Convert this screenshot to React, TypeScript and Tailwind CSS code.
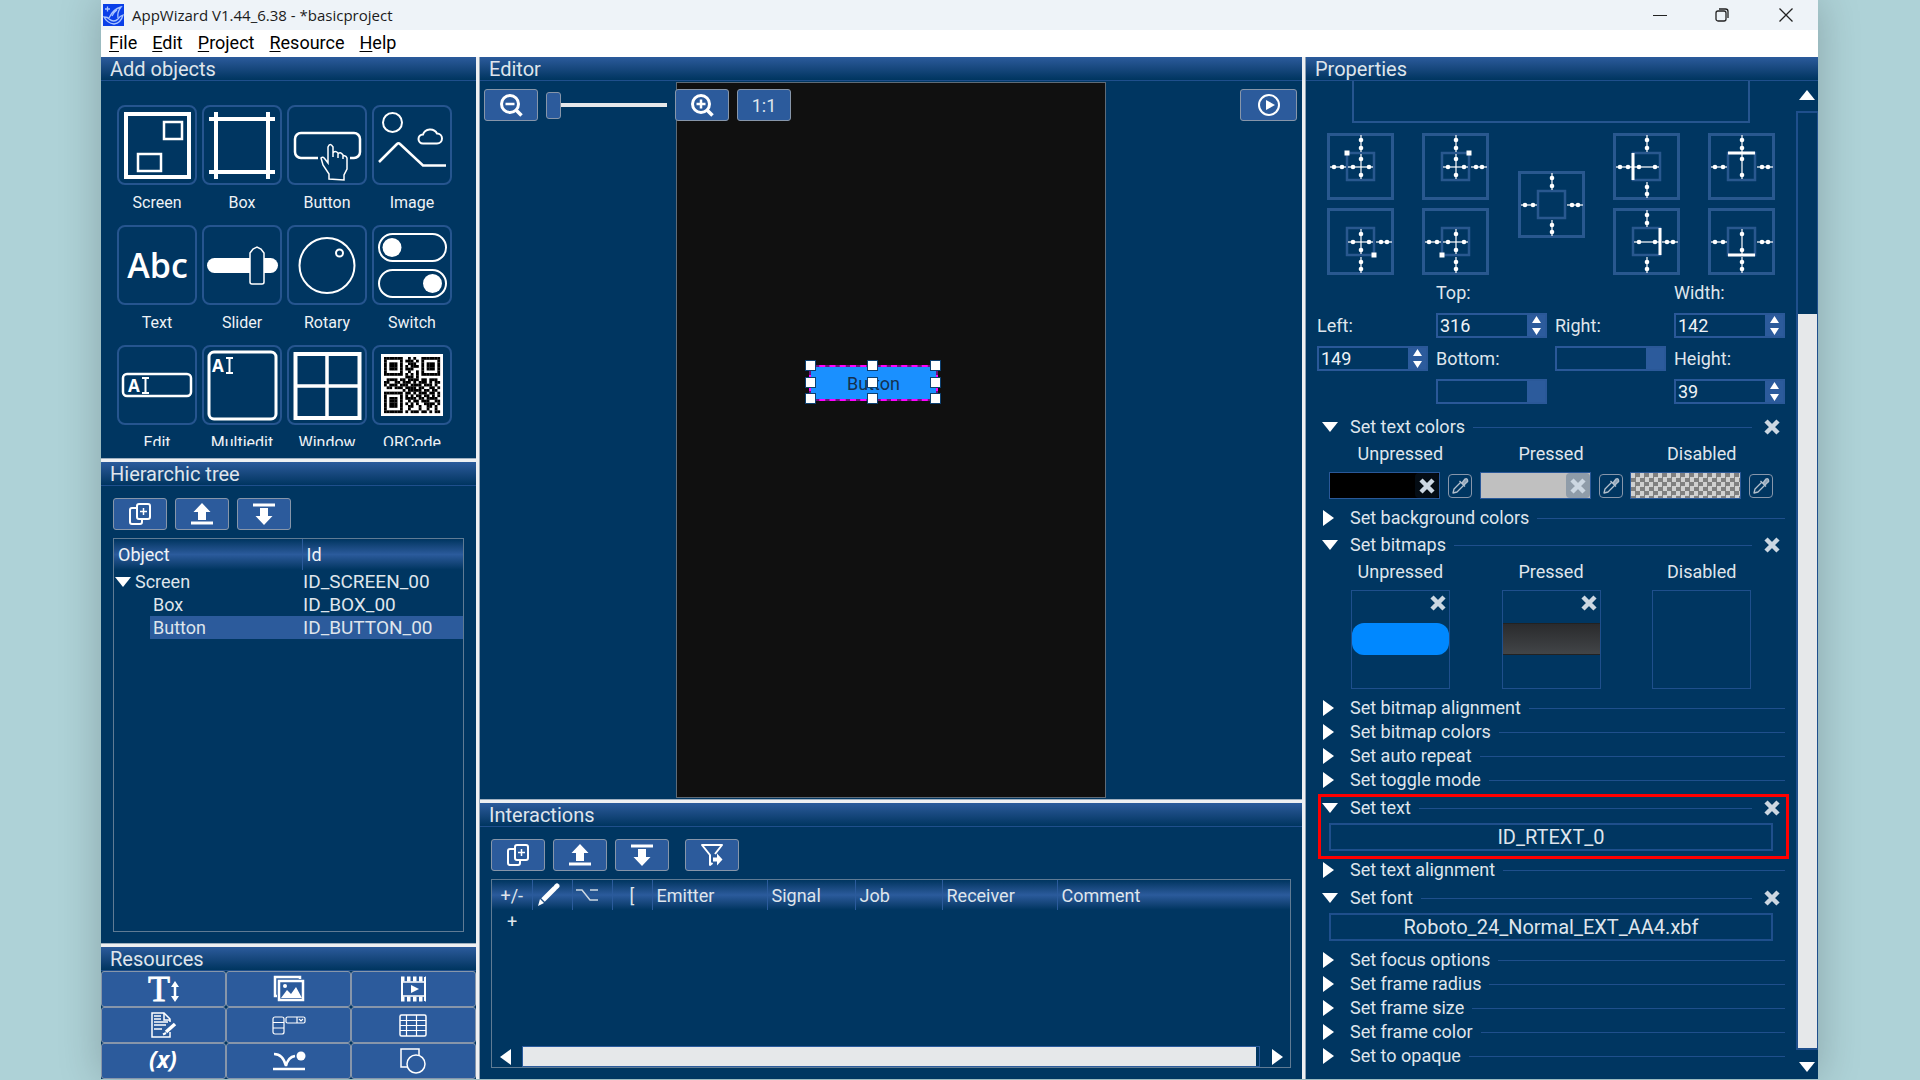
import React from "react";

const QR_ROWS = [
  "111111100101001111111",
  "100000101110101000001",
  "101110100111001011101",
  "101110101011101011101",
  "101110101110001011101",
  "100000100100101000001",
  "111111101010101111111",
  "000000001110100000000",
  "011110110111101101110",
  "110011011101011101011",
  "101110111011110111010",
  "011011101111011001101",
  "000000010111110110110",
  "111111101101011101101",
  "100000101010110110101",
  "101110101111011011110",
  "101110100101101110011",
  "101110101010100111101",
  "101110100110010011010",
  "100000100100010010010",
  "111111101011101101011",
];

function Svg({ w, h, children, label }: { w: number; h: number; children: React.ReactNode; label?: string }) {
  return (
    <svg width={w} height={h} viewBox={`0 0 ${w} ${h}`} fill="none" stroke="white" aria-label={label} aria-hidden={!label} className="shrink-0">
      {children}
    </svg>
  );
}

function PanelTitle({ children }: { children: React.ReactNode }) {
  return (
    <h2 className="flex h-6 shrink-0 items-center border-b border-[#1f4f8c] bg-linear-to-b from-[#2b5b9c] to-[#003560] px-[9px] text-[20px] leading-6 text-[#dfe5ec]">
      {children}
    </h2>
  );
}

function IconButton({ label, children, className = "w-[54px]" }: { label: string; children: React.ReactNode; className?: string }) {
  return (
    <button aria-label={label} className={`flex h-8 shrink-0 items-center justify-center rounded-[3px] border border-[#8796aa] bg-[#2c5b9c] text-[18px] text-[#dfe5ec] ${className}`}>
      {children}
    </button>
  );
}

const HSplit = () => <div className="h-1 shrink-0 border-t border-[#9fb0c0] bg-[#eff0f2]" />;
const VSplit = () => <div className="w-1 shrink-0 border-r border-[#8fa2b5] bg-[#eff0f2]" />;

const AddIcon = () => (
  <Svg w={24} h={24}>
    <g strokeWidth="2">
      <path d="M8 6H4a2 2 0 0 0-2 2v12a2 2 0 0 0 2 2h8a2 2 0 0 0 2-2v-3" />
      <rect x="9" y="2" width="13" height="15" rx="2" />
      <path d="M15.500 6v7M12 9.500h7" strokeWidth="1.500" />
    </g>
  </Svg>
);
const UpIcon = () => (
  <Svg w={24} h={24}>
    <path d="M12 1l8.500 9h-4.500v8h-8v-8h-4.500z" fill="white" stroke="none" />
    <path d="M1 21h22" strokeWidth="3" />
  </Svg>
);
const DownIcon = () => (
  <Svg w={24} h={24}>
    <path d="M12 23l8.500-9h-4.500v-8h-8v8h-4.500z" fill="white" stroke="none" />
    <path d="M1 3h22" strokeWidth="3" />
  </Svg>
);
const FilterIcon = () => (
  <Svg w={24} h={24}>
    <path d="M12.500 20l-2.500 2V12L2 2h20l-7 9" strokeWidth="2" strokeLinejoin="round" />
    <path d="M13 14.500h4v-4l5.500 6-5.500 6v-4h-4z" fill="white" stroke="none" />
  </Svg>
);
const ZoomIcon = ({ plus }: { plus?: boolean }) => (
  <Svg w={24} h={24}>
    <circle cx="11" cy="11" r="8.500" strokeWidth="3" />
    <path d="M16.500 16.500l6 6" strokeWidth="3.500" />
    <path d={plus ? "M6.500 11h9M11 6.500v9" : "M6.500 11h9"} strokeWidth="2.500" />
  </Svg>
);
const CrossIcon = () => (
  <Svg w={16} h={16}>
    <path d="M2 2l12 12M14 2l-12 12" stroke="#ccd7e2" strokeWidth="4.500" />
  </Svg>
);

const Beam = ({ x, y }: { x: number; y: number }) => (
  <>
    <text x={x} y={y} fill="white" stroke="none" fontSize="17" fontWeight="700" fontFamily="Open Sans, sans-serif">A</text>
    <path d={`M${x + 14} ${y - 14}h7M${x + 17.5} ${y - 14}v15M${x + 14} ${y + 1}h7`} strokeWidth="2" />
  </>
);

const OBJECTS: { name: string; icon: React.ReactNode }[] = [
  {
    name: "Screen",
    icon: (
      <>
        <rect x="9" y="9" width="63" height="63" strokeWidth="4" />
        <rect x="47" y="17" width="18" height="17" strokeWidth="2.500" />
        <rect x="21" y="49" width="23" height="17" strokeWidth="2.500" />
      </>
    ),
  },
  { name: "Box", icon: <path d="M14 7v67M66 7v67M7 14h66M7 67h66" strokeWidth="4" /> },
  {
    name: "Button",
    icon: (
      <>
        <path d="M31 53H14a6 6 0 0 1-6-6V34a6 6 0 0 1 6-6h53a6 6 0 0 1 6 6v13a6 6 0 0 1-6 6h-4" strokeWidth="2.500" />
        <path d="M42 74v-5l-6-9-2-7q2-2 4 1l3 4V42q2-5 5 0v10v-4q2-3 5 0v5v-4q2-3 5 1v4v-3q3-1 4 2v11l-3 6v5z" strokeWidth="1.500" />
      </>
    ),
  },
  {
    name: "Image",
    icon: (
      <>
        <circle cx="20.500" cy="17.500" r="9.500" strokeWidth="2" />
        <path d="M7 57l18-18q1.500-1.500 3 0l23 21.500h23" strokeWidth="2.500" />
        <path d="M51 38.500a4.500 4.500 0 0 1 0-9a7.500 7 0 0 1 14-1a5 5 0 0 1 0 10z" strokeWidth="2" />
      </>
    ),
  },
  {
    name: "Text",
    icon: (
      <text x="40.500" y="53" textAnchor="middle" fill="white" stroke="none" fontSize="34" fontWeight="600" fontFamily="Open Sans, sans-serif">Abc</text>
    ),
  },
  {
    name: "Slider",
    icon: (
      <>
        <rect x="5" y="33" width="71" height="15" rx="7.500" fill="white" stroke="none" />
        <path d="M48 28l3-4 4-2 4 2 3 4v29q0 2-2 2H50q-2 0-2-2z" fill="#003661" strokeWidth="1.500" />
      </>
    ),
  },
  {
    name: "Rotary",
    icon: (
      <>
        <circle cx="40" cy="40.500" r="27.500" strokeWidth="2" />
        <circle cx="52.500" cy="28" r="3.500" strokeWidth="2" />
      </>
    ),
  },
  {
    name: "Switch",
    icon: (
      <>
        <rect x="7" y="9" width="67" height="27" rx="13.500" strokeWidth="2" />
        <rect x="7" y="45" width="67" height="27" rx="13.500" strokeWidth="2" />
        <circle cx="20" cy="22.500" r="9.500" fill="white" stroke="none" />
        <circle cx="60.500" cy="58.500" r="9.500" fill="white" stroke="none" />
      </>
    ),
  },
  {
    name: "Edit",
    icon: (
      <>
        <rect x="6" y="29" width="68" height="22" rx="4" strokeWidth="2.500" />
        <Beam x={11} y={47} />
      </>
    ),
  },
  {
    name: "Multiedit",
    icon: (
      <>
        <rect x="7" y="7" width="67" height="67" rx="5" strokeWidth="3" />
        <Beam x={10} y={27} />
      </>
    ),
  },
  {
    name: "Window",
    icon: (
      <>
        <rect x="8.500" y="9" width="64" height="64" strokeWidth="4" />
        <path d="M40 9v64M8 41h64" strokeWidth="3.500" />
      </>
    ),
  },
  {
    name: "QRCode",
    icon: (
      <>
        <rect x="9" y="9" width="62" height="62" fill="white" stroke="none" />
        <g transform="translate(12 12) scale(2.667)" fill="black" stroke="none">
          {QR_ROWS.flatMap((row, y) =>
            row.split("").map((c, x) => (c === "1" ? <rect key={`${x}-${y}`} x={x} y={y} width="1.050" height="1.050" /> : null)),
          )}
        </g>
      </>
    ),
  },
];

function AddObjects() {
  return (
    <section className="h-[401px] shrink-0">
      <PanelTitle>Add objects</PanelTitle>
      <div className="mt-6 grid h-[341px] grid-cols-[repeat(4,80px)] content-start gap-x-[5px] overflow-hidden pl-4">
        {OBJECTS.map((o) => (
          <button key={o.name} className="flex h-[120px] flex-col items-center">
            <span className="flex h-20 w-20 items-center justify-center rounded-lg border-2 border-[#26558f]">
              <svg width="80" height="80" viewBox="0 0 80 80" fill="none" stroke="white" className="shrink-0" aria-hidden>
                {o.icon}
              </svg>
            </span>
            <span className="mt-1.5 text-[16px] leading-6 text-[#eef2f6]">{o.name}</span>
          </button>
        ))}
      </div>
    </section>
  );
}

const TREE = [
  { name: "Screen", id: "ID_SCREEN_00", root: true },
  { name: "Box", id: "ID_BOX_00" },
  { name: "Button", id: "ID_BUTTON_00", selected: true },
];

function HierarchicTree() {
  return (
    <section className="flex min-h-0 flex-1 flex-col">
      <PanelTitle>Hierarchic tree</PanelTitle>
      <div className="mt-3 flex gap-2 px-3">
        <IconButton label="Add"><AddIcon /></IconButton>
        <IconButton label="Move up"><UpIcon /></IconButton>
        <IconButton label="Move down"><DownIcon /></IconButton>
      </div>
      <div className="mx-3 mt-2 mb-[11px] flex-1 border border-[#5f7b94]">
        <table className="w-full table-fixed border-collapse text-left text-[18px] text-[#dfe5ec]">
          <thead>
            <tr className="h-[31px] bg-linear-to-b from-[#003560] via-[#2b5b9c] to-[#003560] text-[#eef2f6]">
              <th className="w-[188px] border-r border-[#2b5b9c] p-0 font-normal leading-6"><span className="pl-1">Object</span></th>
              <th className="p-0 font-normal leading-6"><span className="pl-1">Id</span></th>
            </tr>
          </thead>
          <tbody>
            {TREE.map((r) => (
              <tr key={r.id} className="h-[23px] leading-[23px]">
                <td className="p-0">
                  {r.root ? (
                    <span className="flex items-center gap-1 pl-px">
                      <Svg w={16} h={12}><path d="M0 1h16l-8 10z" fill="white" stroke="none" /></Svg>
                      {r.name}
                    </span>
                  ) : (
                    <span className={r.selected ? "ml-9 block bg-[#2c5b9c] pl-[3px]" : "ml-9 block pl-[3px]"}>{r.name}</span>
                  )}
                </td>
                <td className={r.selected ? "bg-[#2c5b9c] p-0 text-[19px]" : "p-0 text-[19px]"}><span className="pl-px">{r.id}</span></td>
              </tr>
            ))}
          </tbody>
        </table>
      </div>
    </section>
  );
}

const RESOURCES: { name: string; icon: React.ReactNode }[] = [
  {
    name: "Fonts",
    icon: (
      <>
        <text x="2" y="28" fill="white" stroke="white" strokeWidth="0.800" fontSize="36" fontFamily="Liberation Serif, serif">T</text>
        <path d="M29 14v9" strokeWidth="2.500" />
        <path d="M29 8l4 6h-8zM29 29l4-6h-8z" fill="white" stroke="none" />
      </>
    ),
  },
  {
    name: "Images",
    icon: (
      <>
        <path d="M6 23H4V4h25v2" strokeWidth="2.500" />
        <rect x="8" y="8" width="24" height="19" strokeWidth="2.500" />
        <path d="M10 25l6-8 4 4 5-7 6 11z" fill="white" stroke="none" />
        <circle cx="14" cy="13" r="2" fill="white" stroke="none" />
      </>
    ),
  },
  {
    name: "Animations",
    icon: (
      <>
        <path d="M6 4v24M29 4v24" strokeWidth="2" />
        <path d="M5 6h25M5 26h25" strokeWidth="5" strokeDasharray="3.500 2.500" />
        <path d="M6 9h23M6 23h23" strokeWidth="1.500" />
        <path d="M15 12l8 4-8 4z" fill="white" stroke="none" />
      </>
    ),
  },
  {
    name: "Scripts",
    icon: (
      <>
        <path d="M24 23v5H6V4h12l6 6v3" strokeWidth="1.500" />
        <path d="M18 4v7h6M8 7h7M8 10h7M8 13h14M8 16h12M8 20h8" strokeWidth="1.500" />
        <path d="M20 23l9-8" strokeWidth="3.500" />
        <path d="M17 25.500l3-1.500" strokeWidth="2" />
      </>
    ),
  },
  {
    name: "Widgets",
    icon: (
      <>
        <rect x="2" y="8" width="11" height="17" rx="2" strokeWidth="1.200" />
        <path d="M2 13.500h11M2 19h11M26 8v6M28 10l2 2 2-2" strokeWidth="1.200" />
        <rect x="15" y="8" width="19" height="6" rx="1.500" strokeWidth="1.200" />
      </>
    ),
  },
  {
    name: "Tables",
    icon: (
      <>
        <rect x="4" y="6" width="26" height="21" rx="1.500" strokeWidth="1.500" />
        <path d="M4 11.500h26M4 16.500h26M4 21.500h26M10.500 6v21M20.500 6v21" strokeWidth="1.200" />
      </>
    ),
  },
  {
    name: "Variables",
    icon: (
      <text x="17" y="23" textAnchor="middle" fill="white" stroke="none" fontSize="23" fontWeight="700" fontStyle="italic" fontFamily="Open Sans, sans-serif">(x)</text>
    ),
  },
  {
    name: "Easing",
    icon: (
      <>
        <path d="M3 9q9 0 12 12q2-9 9-10" strokeWidth="2.500" />
        <circle cx="30" cy="11" r="4.500" fill="white" stroke="none" />
        <path d="M2 24h32" strokeWidth="2.500" />
      </>
    ),
  },
  {
    name: "Shapes",
    icon: (
      <>
        <path d="M11 22H5V4h18v6" strokeWidth="1.500" />
        <circle cx="20" cy="19" r="9" strokeWidth="1.500" />
      </>
    ),
  },
];

function Resources() {
  return (
    <section className="shrink-0">
      <PanelTitle>Resources</PanelTitle>
      <div className="grid grid-cols-3 bg-[#003661]">
        {RESOURCES.map((r) => (
          <button key={r.name} aria-label={r.name} className="flex h-9 items-center justify-center rounded-[3px] border border-[#8796aa] bg-[#2c5b9c]">
            <Svg w={36} h={32}>{r.icon}</Svg>
          </button>
        ))}
      </div>
    </section>
  );
}

const HANDLES = [
  "-left-1.5 -top-[7px]", "left-14 -top-[7px]", "-right-[5px] -top-[7px]",
  "-left-1.5 top-2.5", "left-14 top-2.5", "-right-[5px] top-2.5",
  "-left-1.5 -bottom-[5px]", "left-14 -bottom-[5px]", "-right-[5px] -bottom-[5px]",
];

function Editor() {
  return (
    <section className="relative flex min-h-0 flex-1 flex-col">
      <PanelTitle>Editor</PanelTitle>
      <div className="relative mt-px mb-px w-[430px] flex-1 self-center border border-[#5e6b78] bg-[#101010]">
        <div className="absolute left-[132px] top-[282px] h-[36px] w-[129px] border-2 border-dashed border-[#f0f] bg-[#70107a]">
          <button className="flex h-full w-full items-center justify-center bg-[#1a90ff] text-[18px] text-[#15304f]">Button</button>
          {HANDLES.map((h) => (
            <span key={h} className={`absolute h-[11px] w-[11px] border border-[#0d4070] bg-white ${h}`} />
          ))}
        </div>
      </div>
      <div className="absolute top-8 right-[5px] left-1 flex items-center">
        <IconButton label="Zoom out"><ZoomIcon /></IconButton>
        <input
          type="range"
          aria-label="Zoom"
          defaultValue={0}
          className="mx-2 h-8 w-[121px] appearance-none bg-transparent [&::-webkit-slider-runnable-track]:h-1 [&::-webkit-slider-runnable-track]:bg-[#e6e8ea] [&::-webkit-slider-thumb]:-mt-[11px] [&::-webkit-slider-thumb]:h-[27px] [&::-webkit-slider-thumb]:w-[15px] [&::-webkit-slider-thumb]:appearance-none [&::-webkit-slider-thumb]:rounded-[3px] [&::-webkit-slider-thumb]:border [&::-webkit-slider-thumb]:border-[#8796aa] [&::-webkit-slider-thumb]:bg-[#2c5b9c]"
        />
        <IconButton label="Zoom in"><ZoomIcon plus /></IconButton>
        <IconButton label="Actual size" className="ml-2 w-[54px]">1:1</IconButton>
        <IconButton label="Play" className="ml-auto w-[57px]">
          <Svg w={24} h={24}>
            <circle cx="12" cy="12" r="10" strokeWidth="2" />
            <path d="M9 7l9 5-9 5z" fill="white" stroke="none" />
          </Svg>
        </IconButton>
      </div>
    </section>
  );
}

function Interactions() {
  const th = "border-r border-[#2b5b9c] p-0 font-normal";
  return (
    <section className="flex h-[276px] shrink-0 flex-col">
      <PanelTitle>Interactions</PanelTitle>
      <div className="mt-3 flex gap-2 px-[11px]">
        <IconButton label="Add"><AddIcon /></IconButton>
        <IconButton label="Move up"><UpIcon /></IconButton>
        <IconButton label="Move down"><DownIcon /></IconButton>
        <IconButton label="Filter" className="ml-2 w-[54px]"><FilterIcon /></IconButton>
      </div>
      <div className="mx-[11px] mt-2 mb-[11px] flex flex-1 flex-col border border-[#5f7b94]">
        <table className="w-full table-fixed border-collapse text-left text-[18px] text-[#dfe5ec]">
          <thead>
            <tr className="h-[30px] bg-linear-to-b from-[#003560] via-[#2b5b9c] to-[#003560]">
              <th className={`w-10 text-center ${th}`}>+/-</th>
              <th className={`w-10 ${th}`} aria-label="Edit">
                <span className="flex pl-1">
                  <Svg w={24} h={24}>
                    <path d="M1 23l2-7 4 4z" fill="white" stroke="none" />
                    <path d="M6 17l12-12" strokeWidth="5" />
                    <path d="M19 4l1-1" strokeWidth="5" strokeLinecap="round" />
                  </Svg>
                </span>
              </th>
              <th className={`w-10 ${th}`} aria-label="Condition">
                <span className="flex justify-center pr-2.5">
                  <Svg w={22} h={14}><path d="M0 2h6l8 10h8M14 2h8" strokeWidth="1.500" stroke="#ccd7e2" /></Svg>
                </span>
              </th>
              <th className={`w-10 text-center ${th}`}>[</th>
              <th className={`w-[115px] ${th}`}><span className="pl-1">Emitter</span></th>
              <th className={`w-[88px] ${th}`}><span className="pl-1">Signal</span></th>
              <th className={`w-[87px] ${th}`}><span className="pl-1">Job</span></th>
              <th className={`w-[115px] ${th}`}><span className="pl-1">Receiver</span></th>
              <th className="p-0 font-normal"><span className="pl-1">Comment</span></th>
            </tr>
          </thead>
          <tbody>
            <tr className="h-[23px] leading-[23px]">
              <td className="p-0 text-center">+</td>
            </tr>
          </tbody>
        </table>
        <div className="mt-auto flex h-[21px] items-center">
          <button aria-label="Scroll left" className="flex w-[30px] justify-center pr-1"><Svg w={12} h={16}><path d="M12 0v16l-11-8z" fill="white" stroke="none" /></Svg></button>
          <div className="h-full flex-1 border border-[#2b5b9c] pr-[3px]">
            <div className="h-full bg-[#e6e8ea]" />
          </div>
          <button aria-label="Scroll right" className="flex w-[30px] justify-center pl-1"><Svg w={12} h={16}><path d="M1 0v16l11-8z" fill="white" stroke="none" /></Svg></button>
        </div>
      </div>
    </section>
  );
}

const LINES: Record<string, { d: string; dots: [number, number][] }> = {
  t: { d: "M34 2v17", dots: [[34, 7], [34, 15]] },
  b: { d: "M34 49v16", dots: [[34, 54], [34, 61]] },
  l: { d: "M3 34h16", dots: [[7, 34], [15, 34]] },
  r: { d: "M49 34h16", dots: [[54, 34], [60, 34]] },
  h: { d: "M21 34h25", dots: [[26, 34], [42, 34]] },
  v: { d: "M34 21v25", dots: [[34, 26], [34, 42]] },
};
const MARKS: Record<string, string> = {
  TL: "M17.500 20h5", TR: "M44.500 20h5", BL: "M17.500 47h5", BR: "M44.500 47h5",
  L: "M20 20v27", R: "M47 20v27", T: "M20 20h27", B: "M20 47h27",
};

function Anchor({ lines, mark }: { lines: string; mark?: string }) {
  return (
    <button aria-label={`Anchor ${mark ?? "center"}`} className="h-[67px] w-[67px]">
      <Svg w={67} h={67}>
        <rect x="1.500" y="1.500" width="64" height="64" stroke="#29588f" strokeWidth="3" />
        <rect x="20" y="20" width="27" height="27" stroke="#29588f" strokeWidth="2.500" />
        {lines.split("").map((k) => (
          <g key={k}>
            <path d={LINES[k].d} strokeWidth="1.200" />
            {LINES[k].dots.map(([x, y]) => (
              <circle key={`${x}-${y}`} cx={x} cy={y} r="2.300" fill="white" stroke="none" />
            ))}
          </g>
        ))}
        {mark && <path d={MARKS[mark]} strokeWidth={mark.length === 2 ? 5 : 3} />}
      </Svg>
    </button>
  );
}

function NumberField({ id, value = "" }: { id: string; value?: string }) {
  return (
    <span className="flex h-[25px] border-2 border-[#2a5898] bg-[#003661]">
      <input id={id} defaultValue={value} inputMode="numeric" className="w-0 flex-1 bg-transparent pl-0.5 text-[18px] leading-5 text-[#eef2f6] outline-none" />
      <button aria-label={`Step ${id}`} className="flex w-[18px] items-center justify-center bg-[#2c5b9c]">
        {value && (
          <Svg w={9} h={19}><path d="M4.500 0l4.500 7h-9zM4.500 19l4.500-7h-9z" fill="white" stroke="none" /></Svg>
        )}
      </button>
    </span>
  );
}

function Coordinate({ label, value }: { label: string; value?: string }) {
  const id = label.toLowerCase();
  return (
    <div className="grid grid-rows-[33px_33px] *:self-center">
      <label htmlFor={id}>{label}:</label>
      <NumberField id={id} value={value} />
    </div>
  );
}

function Section({ title, open }: { title: string; open?: boolean }) {
  return (
    <div className={`flex items-center ${open ? "h-[30px]" : "h-6"}`}>
      <button aria-expanded={!!open} className="flex items-center text-[18px] leading-6">
        <span className="flex w-[33px] pl-[5px]">
          {open ? (
            <Svg w={16} h={12}><path d="M0 1h16l-8 10z" fill="white" stroke="none" /></Svg>
          ) : (
            <Svg w={12} h={16}><path d="M1 0v16l11-8z" fill="white" stroke="none" /></Svg>
          )}
        </span>
        {title}
      </button>
      <span className="ml-2 h-px flex-1 bg-[#1f4f8c]" />
      {open && (
        <button aria-label={`Remove ${title}`} className="flex w-[33px] justify-end pr-[5px]"><CrossIcon /></button>
      )}
    </div>
  );
}

const States = () => (
  <div className="mx-2 grid h-[23px] grid-cols-3 text-center text-[18px] leading-[23px]">
    <span>Unpressed</span>
    <span>Pressed</span>
    <span>Disabled</span>
  </div>
);

function Swatch({ name, fill, cross }: { name: string; fill: string; cross?: string }) {
  return (
    <div className="flex items-center gap-2">
      <div className={`flex h-[27px] w-[111px] justify-end border border-[#2a5898] ${fill}`}>
        {cross && (
          <button aria-label={`Clear ${name}`} className={`flex w-6 items-center justify-center rounded-sm ${cross}`}><CrossIcon /></button>
        )}
      </div>
      <button aria-label={`Pick ${name}`} className="flex h-6 w-6 items-center justify-center rounded-sm border border-[#8796aa]">
        <Svg w={20} h={20}>
          <g stroke="#b3c0cd" strokeWidth="1.300" strokeLinejoin="round">
            <path d="M11 6L4 13l-1 4 4-1 7-7" />
            <path d="M9.500 5l5.500 5.500M12 7l3-4q2-1 2.500 1t-.5 2l-3 3z" fill="#8fa2b5" />
          </g>
        </Svg>
      </button>
    </div>
  );
}

function Bitmap({ name, children }: { name: string; children?: React.ReactNode }) {
  return (
    <div className="relative h-[99px] w-[99px] border border-[#1f4f8c] pt-8">
      {children}
      {children && (
        <button aria-label={`Clear ${name}`} className="absolute top-1 right-[3px]"><CrossIcon /></button>
      )}
    </div>
  );
}

const Value = ({ children }: { children: React.ReactNode }) => (
  <button className="mx-3 mb-[7px] flex h-7 items-center justify-center border-2 border-[#1f4f8c] text-[20px] leading-6">{children}</button>
);

function Properties() {
  return (
    <section className="flex w-[512px] shrink-0 flex-col">
      <PanelTitle>Properties</PanelTitle>
      <div className="flex min-h-0 flex-1">
        <div className="flex min-w-0 flex-1 flex-col overflow-hidden px-[11px] text-[#dfe5ec]">
          <div className="mx-[35px] h-[42px] shrink-0 border-2 border-t-0 border-[#26558f]" />
          <div className="mx-2.5 mt-2.5 flex items-center justify-between">
            <div className="grid gap-2"><Anchor lines="tlhv" mark="TL" /><Anchor lines="brhv" mark="BR" /></div>
            <div className="grid gap-2"><Anchor lines="trhv" mark="TR" /><Anchor lines="blhv" mark="BL" /></div>
            <Anchor lines="tblr" />
            <div className="grid gap-2"><Anchor lines="tblh" mark="L" /><Anchor lines="tbrh" mark="R" /></div>
            <div className="grid gap-2"><Anchor lines="tlrv" mark="T" /><Anchor lines="blrv" mark="B" /></div>
          </div>
          <div className="mt-px mb-1 grid grid-cols-4 items-center gap-x-2 text-[18px]">
            <Coordinate label="Left" value="149" />
            <div>
              <Coordinate label="Top" value="316" />
              <Coordinate label="Bottom" />
            </div>
            <Coordinate label="Right" />
            <div>
              <Coordinate label="Width" value="142" />
              <Coordinate label="Height" value="39" />
            </div>
          </div>

          <Section title="Set text colors" open />
          <States />
          <div className="mx-3 my-[7px] flex justify-between">
            <Swatch name="unpressed color" fill="bg-black" cross="bg-[#040c14]" />
            <Swatch name="pressed color" fill="bg-[#c0c0c0]" cross="bg-[#8f9ca9]" />
            <Swatch name="disabled color" fill="bg-[repeating-conic-gradient(#808080_0_25%,#d0d0d0_0_50%)] bg-size-[9px_9px]" />
          </div>
          <Section title="Set background colors" />
          <Section title="Set bitmaps" open />
          <States />
          <div className="mx-[34px] my-[7px] flex justify-between">
            <Bitmap name="unpressed bitmap"><div className="h-8 rounded-xl bg-[#0088ff]" /></Bitmap>
            <Bitmap name="pressed bitmap"><div className="h-8 border-y border-[#222] bg-linear-to-b from-[#2a2b2d] to-[#424548]" /></Bitmap>
            <Bitmap name="disabled bitmap" />
          </div>
          <Section title="Set bitmap alignment" />
          <Section title="Set bitmap colors" />
          <Section title="Set auto repeat" />
          <Section title="Set toggle mode" />
          <div className="relative mt-px flex flex-col">
            <Section title="Set text" open />
            <Value>ID_RTEXT_0</Value>
            <span className="pointer-events-none absolute top-px -right-1 -bottom-px left-px border-3 border-[#f00]" />
          </div>
          <Section title="Set text alignment" />
          <div className="mt-px flex flex-col">
            <Section title="Set font" open />
            <Value>Roboto_24_Normal_EXT_AA4.xbf</Value>
          </div>
          <Section title="Set focus options" />
          <Section title="Set frame radius" />
          <Section title="Set frame size" />
          <Section title="Set frame color" />
          <Section title="Set to opaque" />
        </div>
        <div className="flex w-[22px] flex-col">
          <button aria-label="Scroll up" className="mb-0.5 flex h-7 items-center justify-center"><Svg w={16} h={12}><path d="M0 11h16l-8-10z" fill="white" stroke="none" /></Svg></button>
          <div className="flex flex-1 flex-col border-2 border-r border-[#1f4f8c] pt-[201px]">
            <div className="flex-1 bg-[#e6e8ea]" />
          </div>
          <button aria-label="Scroll down" className="flex h-[29px] items-center justify-center pt-1"><Svg w={16} h={12}><path d="M0 1h16l-8 10z" fill="white" stroke="none" /></Svg></button>
        </div>
      </div>
    </section>
  );
}

const MENU = ["File", "Edit", "Project", "Resource", "Help"];

export default function App() {
  return (
    <div className="flex h-screen min-h-[1080px] overflow-hidden bg-[#aed2d7] pr-[102px] pb-px pl-[101px] font-[Roboto,sans-serif]">
      <div className="flex min-w-0 flex-1 flex-col bg-[#003661] shadow-[0_0_40px_rgba(0,0,0,0.22)]">
        <header className="flex h-[30px] shrink-0 items-center bg-[#eef3f8] pl-0.5 text-[#1b1b1b]">
          <svg width="21" height="22" viewBox="0 0 21 22" aria-hidden>
            <rect width="21" height="22" fill="#0a3fe8" />
            <g fill="none" stroke="#a9c4ff" strokeWidth="1.300">
              <path d="M1 13q4 0 5 2q5 4 9 0q2-3 5-4q-2 8-9 9q-7-1-10-7z" />
              <path d="M6 14q4-9 12-11q-4 5-3 11M9 12q2-4 5-6" />
              <path d="M4.500 2.500v5M2 5h5" />
            </g>
          </svg>
          <h1 className="ml-2 font-['Open_Sans',sans-serif] text-[15px]">AppWizard V1.44_6.38 - *basicproject</h1>
          <div className="ml-auto flex h-full">
            <button aria-label="Minimize" className="flex w-[62px] items-center justify-center"><Svg w={14} h={14}><path d="M0 7.500h14" stroke="#222" /></Svg></button>
            <button aria-label="Restore" className="flex w-[62px] items-center justify-center"><Svg w={14} h={14}><g stroke="#222" strokeWidth="1.300"><rect x="1" y="3" width="10" height="10" rx="2" /><path d="M4 1h6.500q2.500 0 2.500 2.500v6.500" /></g></Svg></button>
            <button aria-label="Close" className="flex w-[65px] items-center justify-center"><Svg w={14} h={14}><path d="M.5.5l13 13M13.500.5l-13 13" stroke="#222" strokeWidth="1.300" /></Svg></button>
          </div>
        </header>
        <nav className="flex h-[27px] shrink-0 items-center gap-[15px] bg-white pb-0.5 pl-2 text-[18px] text-black">
          {MENU.map((m) => (
            <button key={m}>
              <span className="underline underline-offset-2">{m[0]}</span>
              {m.slice(1)}
            </button>
          ))}
        </nav>
        <main className="flex min-h-0 flex-1">
          <div className="flex w-[375px] shrink-0 flex-col">
            <AddObjects />
            <HSplit />
            <HierarchicTree />
            <HSplit />
            <Resources />
          </div>
          <VSplit />
          <div className="flex min-w-0 flex-1 flex-col">
            <Editor />
            <HSplit />
            <Interactions />
          </div>
          <VSplit />
          <Properties />
        </main>
      </div>
    </div>
  );
}
